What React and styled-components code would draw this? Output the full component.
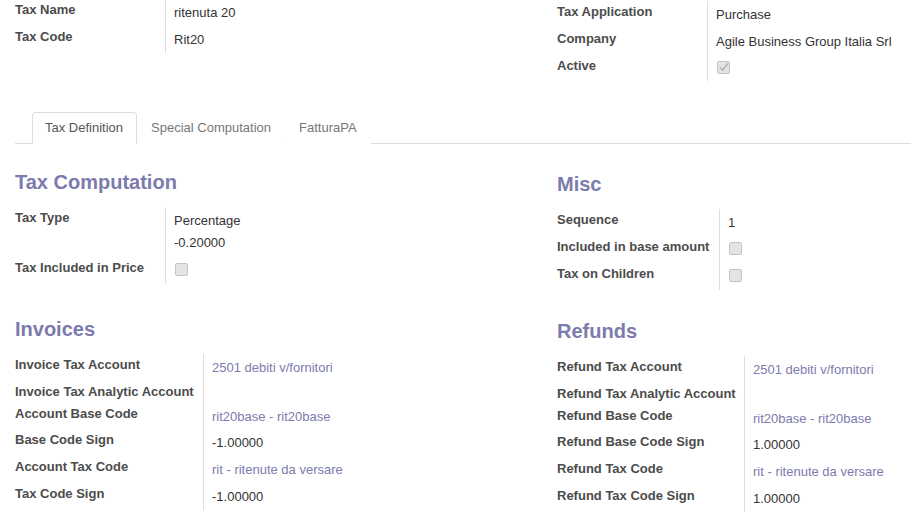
import React from 'react';
import styled, { createGlobalStyle } from 'styled-components';

const Global = createGlobalStyle`
  html, body {
    margin: 0;
    padding: 0;
    background: #ffffff;
  }
  body {
    font-family: "Liberation Sans", Arial, sans-serif;
    font-size: 13px;
    color: #333333;
    overflow: hidden;
  }
`;

const Sheet = styled.div`
  width: 911px;
  height: 512px;
  overflow: hidden;
  padding-left: 15px;
  box-sizing: border-box;
`;

const Columns = styled.div`
  display: grid;
  grid-template-columns: 542px 542px;
  align-items: start;
  margin-top: ${p => p.top || 0}px;
`;

const Column = styled.div`
  padding-top: ${p => (p.right ? 2 : 0)}px;
`;

const Heading = styled.h2`
  margin: 0 0 14px;
  font-size: 20px;
  line-height: 22px;
  font-weight: bold;
  color: #7c7bad;
`;

const Group = styled.div`
  display: grid;
  grid-template-columns: ${p => p.labelWidth}px 1fr;
`;

const Label = styled.div`
  padding: 2px 8px 2px 0;
  line-height: 18px;
  font-weight: bold;
  color: #4c4c4c;
  white-space: nowrap;
`;

const Value = styled.div`
  border-left: 1px solid #dddddd;
  padding: 5px 0 3.8px 8px;
  line-height: 18px;
  min-height: ${p => (p.empty ? 0 : 18)}px;
  color: ${p => (p.link ? '#7c7bad' : '#333333')};
  white-space: nowrap;
`;

const Line = styled.div`
  padding-bottom: 1px;
  & + & {
    margin-top: 3px;
  }
`;

const Check = styled.span`
  display: inline-block;
  width: 11px;
  height: 11px;
  margin: 1px 0 0 1px;
  border: 1px solid #c4c4c4;
  border-radius: 2px;
  background: #e4e4e4;
  position: relative;
  vertical-align: top;
`;

const Tabs = styled.ul`
  display: flex;
  list-style: none;
  margin: ${p => p.top}px 0 0;
  padding: 0 0 0 17px;
  border-bottom: 1px solid #dddddd;
`;

const Tab = styled.li`
  margin: 0 1px -1px 0;
  padding: 6px 13px 6px 12px;
  line-height: 18px;
  border: 1px solid ${p => (p.active ? '#dddddd' : 'transparent')};
  border-bottom-color: ${p => (p.active ? '#ffffff' : 'transparent')};
  border-radius: 4px 4px 0 0;
  background: #ffffff;
  color: ${p => (p.active ? '#555555' : '#777777')};
`;

const Tick = () => (
  <svg width="11" height="11" viewBox="0 0 11 11" style={{ position: 'absolute', left: 0, top: 0 }}>
    <path d="M2 5.5 L4.5 8 L10 1.5" fill="none" stroke="#b4b4b4" strokeWidth="1.6" />
  </svg>
);

const Field = ({ label, children, link, empty }) => (
  <>
    <Label>{label}</Label>
    <Value link={link} empty={empty}>{children}</Value>
  </>
);

export default function App() {
  return (
    <Sheet>
      <Global />
      <Columns top={-1}>
        <Column>
          <Group labelWidth={150}>
            <Field label="Tax Name">ritenuta 20</Field>
            <Field label="Tax Code">Rit20</Field>
          </Group>
        </Column>
        <Column right>
          <Group labelWidth={150}>
            <Field label="Tax Application">Purchase</Field>
            <Field label="Company">Agile Business Group Italia Srl</Field>
            <Field label="Active"><Check><Tick /></Check></Field>
          </Group>
        </Column>
      </Columns>

      <Tabs top={31}>
        <Tab active>Tax Definition</Tab>
        <Tab>Special Computation</Tab>
        <Tab>FatturaPA</Tab>
      </Tabs>

      <Columns top={27}>
        <Column>
          <Heading>Tax Computation</Heading>
          <Group labelWidth={150}>
            <Field label="Tax Type">
              <Line>Percentage</Line>
              <Line>-0.20000</Line>
            </Field>
            <Field label="Tax Included in Price"><Check /></Field>
          </Group>
        </Column>
        <Column right>
          <Heading>Misc</Heading>
          <Group labelWidth={162}>
            <Field label="Sequence">1</Field>
            <Field label="Included in base amount"><Check /></Field>
            <Field label="Tax on Children"><Check /></Field>
          </Group>
        </Column>
      </Columns>

      <Columns top={28}>
        <Column>
          <Heading>Invoices</Heading>
          <Group labelWidth={188}>
            <Field label="Invoice Tax Account" link>2501 debiti v/fornitori</Field>
            <Field label="Invoice Tax Analytic Account" empty />
            <Field label="Account Base Code" link>rit20base - rit20base</Field>
            <Field label="Base Code Sign">-1.00000</Field>
            <Field label="Account Tax Code" link>rit - ritenute da versare</Field>
            <Field label="Tax Code Sign">-1.00000</Field>
          </Group>
        </Column>
        <Column right>
          <Heading>Refunds</Heading>
          <Group labelWidth={187}>
            <Field label="Refund Tax Account" link>2501 debiti v/fornitori</Field>
            <Field label="Refund Tax Analytic Account" empty />
            <Field label="Refund Base Code" link>rit20base - rit20base</Field>
            <Field label="Refund Base Code Sign">1.00000</Field>
            <Field label="Refund Tax Code" link>rit - ritenute da versare</Field>
            <Field label="Refund Tax Code Sign">1.00000</Field>
          </Group>
        </Column>
      </Columns>
    </Sheet>
  );
}
